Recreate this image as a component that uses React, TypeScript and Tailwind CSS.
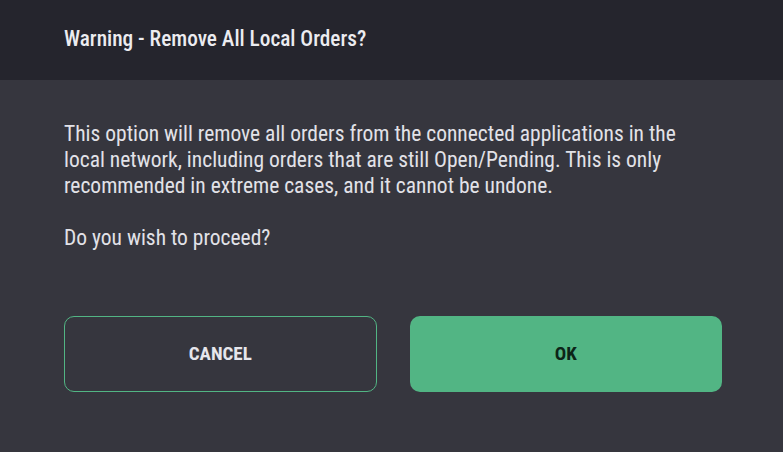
import React from "react";

const paragraphs = [
  "This option will remove all orders from the connected applications in the local network, including orders that are still Open/Pending. This is only recommended in extreme cases, and it cannot be undone.",
  "Do you wish to proceed?",
];

const App: React.FC = () => {
  return (
    <div className="w-[783px] h-[452px] flex flex-col bg-[#36363e] font-['Roboto_Condensed','Roboto',sans-serif] font-stretch-condensed">
      <div className="h-[80px] shrink-0 bg-[#25252d] px-16 pt-[26px]">
        <h1 className="text-[21.3px] leading-[26px] font-medium text-[#ececf0]">
          Warning - Remove All Local Orders?
        </h1>
      </div>
      <div className="flex-1 flex flex-col pl-16 pr-[61px] pt-[41px]">
        <div className="flex flex-col gap-[26px] text-[21.5px] leading-[26px] text-[#e2e2e8] pr-[40px]">
          {paragraphs.map((p) => (
            <p key={p}>{p}</p>
          ))}
        </div>
        <div className="mt-auto mb-[60px] grid grid-cols-2 gap-[33px]">
          <button className="h-[76px] rounded-[10px] border-[1.5px] border-[#52b584] text-[19px] font-bold text-[#e6e6ec]">
            CANCEL
          </button>
          <button className="h-[76px] rounded-[10px] bg-[#52b584] text-[19px] font-bold text-[#0c2418]">
            OK
          </button>
        </div>
      </div>
    </div>
  );
};

export default App;
